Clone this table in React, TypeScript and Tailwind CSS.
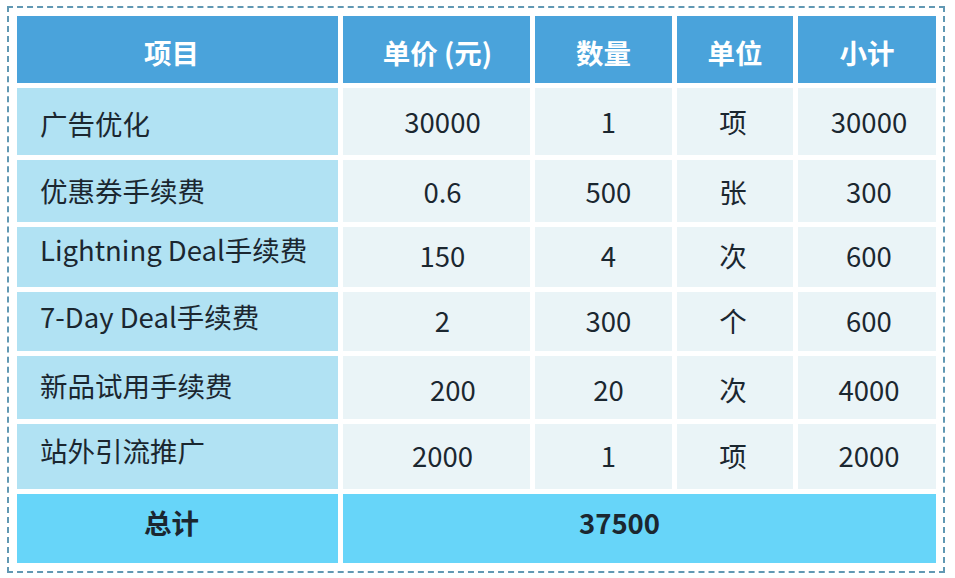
const head = ["项目", "单价 (元)", "数量", "单位", "小计"];

type Row = {
  name: string;
  price: string;
  qty: string;
  unit: string;
  sub: string;
  h: string;
  namePad: string;
  numPad: string;
  pricePad?: string;
};

const rows: Row[] = [
  { name: "广告优化", price: "30000", qty: "1", unit: "项", sub: "30000", h: "h-[67px]", namePad: "pt-[4px]", numPad: "pt-0" },
  { name: "优惠券手续费", price: "0.6", qty: "500", unit: "张", sub: "300", h: "h-[62px]", namePad: "pt-0", numPad: "pt-[2px]" },
  { name: "Lightning Deal手续费", price: "150", qty: "4", unit: "次", sub: "600", h: "h-[60px]", namePad: "pb-[14px]", numPad: "pb-[2px]" },
  { name: "7-Day Deal手续费", price: "2", qty: "300", unit: "个", sub: "600", h: "h-[59px]", namePad: "pb-[9px]", numPad: "pb-[1px]" },
  { name: "新品试用手续费", price: "200", qty: "20", unit: "次", sub: "4000", h: "h-[63px]", namePad: "pb-[3px]", numPad: "pt-[4px]", pricePad: "pl-[33px]" },
  { name: "站外引流推广", price: "2000", qty: "1", unit: "项", sub: "2000", h: "h-[65px]", namePad: "pb-[11px]", numPad: "pb-[1px]" },
];

export default function App() {
  return (
    <div
      className="w-[955px] h-[578px] bg-white pl-[7px] pt-[6px] text-[#1b2730]"
      style={{ fontFamily: '"Noto Sans CJK SC", "Noto Sans", sans-serif' }}
    >
      <div className="w-[938px] h-[567px] border-2 border-dashed border-[#6198b3] p-[8px]">
        <div className="grid grid-cols-[321px_187px_137px_116px_138px] gap-[5px] text-[27.5px] leading-none">
          {head.map((h, i) => (
            <div
              key={h}
              className={`h-[67px] bg-[#4aa3db] text-white font-bold flex items-center justify-center pt-[7px] ${i === 0 ? "pr-[12px]" : i === 1 ? "pl-[2px]" : ""}`}
            >
              {h}
            </div>
          ))}
          {rows.map((r) => (
            <div key={r.name} className="contents">
              <div className={`${r.h} bg-[#b1e2f3] flex items-center pl-[23px] ${r.namePad}`}>{r.name}</div>
              <div className={`${r.h} bg-[#eaf4f7] flex items-center justify-center ${r.numPad} ${r.pricePad ?? "pl-[12px]"}`}>{r.price}</div>
              <div className={`${r.h} bg-[#eaf4f7] flex items-center justify-center ${r.numPad} pl-[10px]`}>{r.qty}</div>
              <div className={`${r.h} bg-[#eaf4f7] flex items-center justify-center ${r.numPad} pr-[4px]`}>{r.unit}</div>
              <div className={`${r.h} bg-[#eaf4f7] flex items-center justify-center ${r.numPad} pl-[4px]`}>{r.sub}</div>
            </div>
          ))}
          <div className="h-[69px] bg-[#67d5f9] font-bold flex items-center justify-center pr-[12px] pb-[11px]">总计</div>
          <div className="col-span-4 h-[69px] bg-[#67d5f9] font-bold flex items-center justify-center pr-[40px] pb-[11px]">37500</div>
        </div>
      </div>
    </div>
  );
}
